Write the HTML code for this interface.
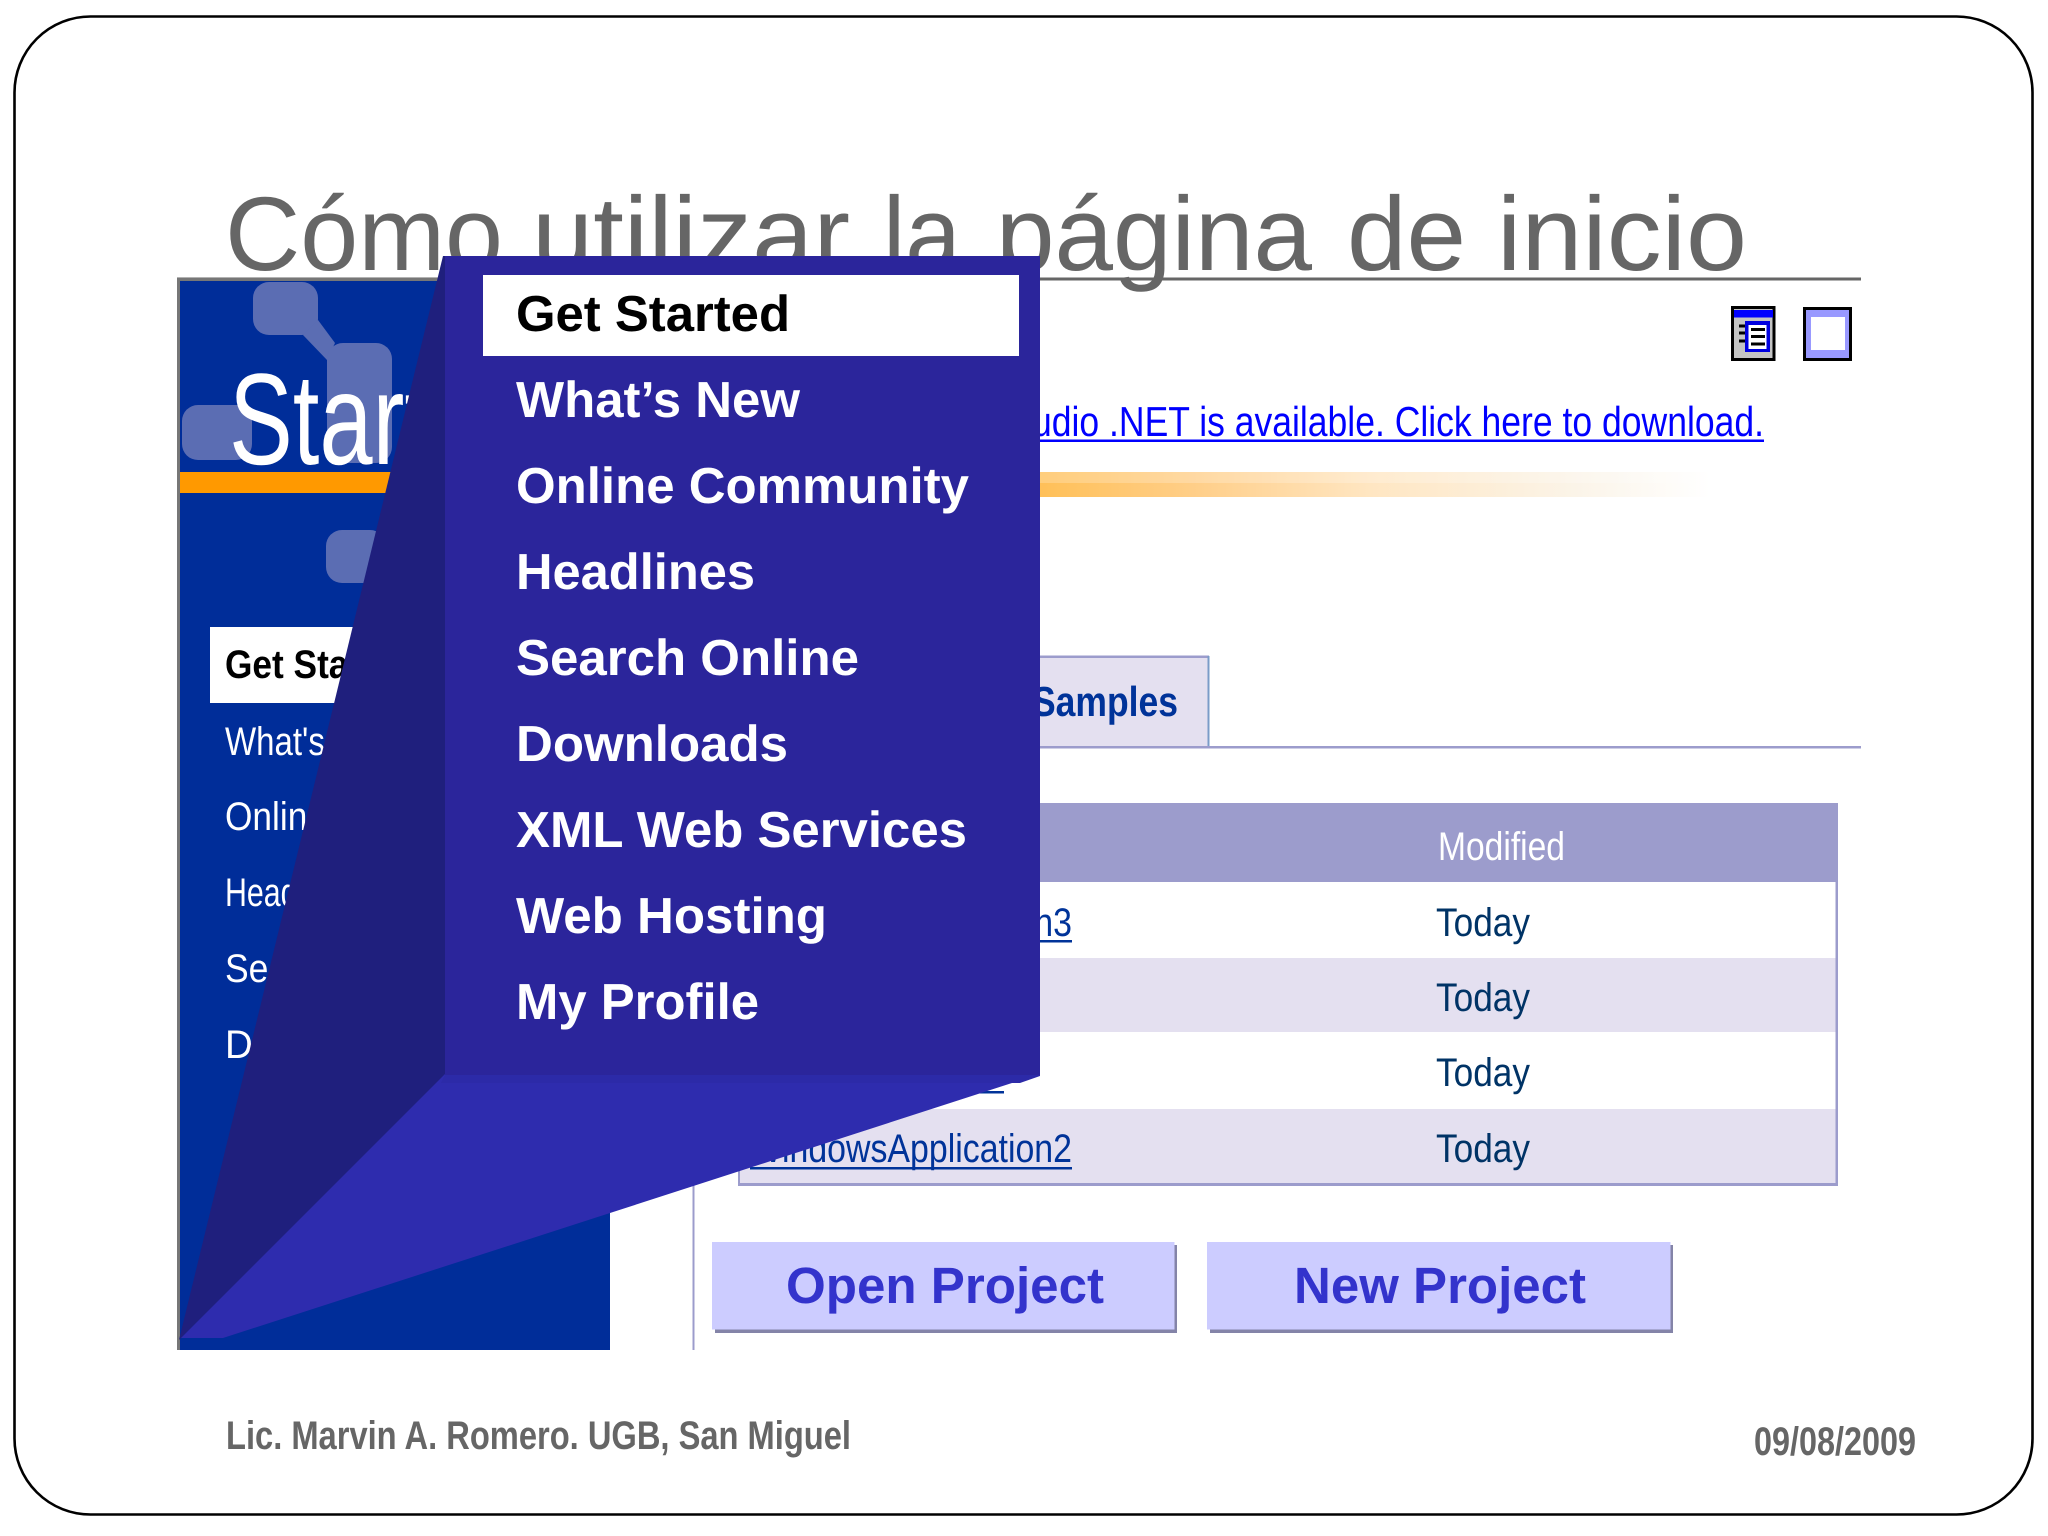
<!DOCTYPE html>
<html lang="es">
<head>
<meta charset="utf-8">
<title>Cómo utilizar la página de inicio</title>
<style>
html,body{margin:0;padding:0;background:#fff;width:2048px;height:1536px;overflow:hidden}
svg{display:block;position:absolute;left:0;top:0;text-rendering:geometricPrecision}
text{font-family:"Liberation Sans",sans-serif}
.h{font-size:105px;fill:#666}
.m{font-weight:bold;font-size:50.7px;fill:#fff}
.n{font-size:40px;fill:#fff}
.t{font-size:40px;fill:#003366}
.l{font-size:40px;fill:#003399}
.b{font-weight:bold;font-size:51px;fill:#3333cc}
.f{font-weight:bold;font-size:40px;fill:#666}
</style>
</head>
<body>
<svg width="2048" height="1536" viewBox="0 0 2048 1536" xmlns="http://www.w3.org/2000/svg">
<defs>
<linearGradient id="g" x1="0" x2="1" y1="0" y2="0">
<stop offset="0" stop-color="#ffbf55"/>
<stop offset=".25" stop-color="#ffcf8a"/>
<stop offset=".5" stop-color="#ffe6c2"/>
<stop offset=".8" stop-color="#fbf4e8"/>
<stop offset="1" stop-color="#ffffff"/>
</linearGradient>
</defs>

<rect x="14.5" y="16.5" width="2018" height="1498" rx="76" ry="76" fill="#fff" stroke="#000" stroke-width="2.6"/>

<!-- title -->
<text x="225" y="270" class="h" textLength="278" lengthAdjust="spacingAndGlyphs">Cómo</text>
<text x="532" y="270" class="h" textLength="318" lengthAdjust="spacingAndGlyphs">utilizar</text>
<text x="883" y="270" class="h" textLength="78" lengthAdjust="spacingAndGlyphs">la</text>
<text x="996" y="270" class="h" textLength="316" lengthAdjust="spacingAndGlyphs">página</text>
<text x="1347" y="270" class="h" textLength="119" lengthAdjust="spacingAndGlyphs">de</text>
<text x="1497" y="270" class="h" textLength="250" lengthAdjust="spacingAndGlyphs">inicio</text>
<rect x="177" y="277.5" width="1684" height="3" fill="#666"/>

<!-- left panel -->
<rect x="177" y="279" width="433" height="1071" fill="#002d99"/>
<rect x="177" y="279" width="3" height="1071" fill="#777"/>
<rect x="177" y="278" width="433" height="3" fill="#777"/>
<g fill="#5b6db3">
<rect x="253" y="282" width="65" height="53" rx="16"/>
<polygon points="303,335 318,320 335,343 327,360"/>
<rect x="327" y="343" width="65" height="120" rx="16"/>
<rect x="182" y="405" width="70" height="55" rx="16"/>
<rect x="326" y="530" width="60" height="53" rx="16"/>
</g>
<text x="229" y="464" font-size="130" fill="#fff" textLength="202" lengthAdjust="spacingAndGlyphs">Start</text>
<rect x="180" y="472" width="240" height="21" fill="#ff9900"/>

<rect x="210" y="627" width="170" height="76" fill="#fff"/>
<text x="225" y="678" class="n" style="font-weight:bold;fill:#000" textLength="190" lengthAdjust="spacingAndGlyphs">Get Started</text>
<text x="225" y="755" class="n" textLength="175" lengthAdjust="spacingAndGlyphs">What's New</text>
<text x="225" y="830" class="n" textLength="290" lengthAdjust="spacingAndGlyphs">Online Community</text>
<text x="225" y="906" class="n" textLength="135" lengthAdjust="spacingAndGlyphs">Headlines</text>
<text x="225" y="982" class="n" textLength="225" lengthAdjust="spacingAndGlyphs">Search Online</text>
<text x="225" y="1058" class="n" textLength="190" lengthAdjust="spacingAndGlyphs">Downloads</text>

<!-- right content -->
<rect x="692.5" y="747" width="2" height="603" fill="#9c9ccc"/>

<!-- icons -->
<rect x="1732.5" y="307.5" width="41.5" height="52" fill="#c4c4c4" stroke="#000" stroke-width="3"/>
<rect x="1734" y="310" width="39" height="7.5" fill="#0000ff"/>
<rect x="1745" y="321" width="25" height="31" fill="#0000e0"/>
<rect x="1748.5" y="325" width="18" height="24" fill="#fff"/>
<g fill="#000">
<rect x="1751" y="328" width="14" height="3"/><rect x="1751" y="335" width="14" height="3"/><rect x="1751" y="342.500" width="14" height="3"/>
<rect x="1739" y="324.500" width="6" height="3"/><rect x="1739" y="331.500" width="6" height="3"/><rect x="1739" y="339.500" width="6" height="3"/>
</g>
<rect x="1804.500" y="308.500" width="46" height="51" fill="#9999ff" stroke="#000" stroke-width="3"/>
<rect x="1811" y="317" width="34" height="33" fill="#fff"/>

<!-- link -->
<text x="1032" y="436" font-size="42" fill="#0000ff" textLength="732" lengthAdjust="spacingAndGlyphs">udio .NET is available. Click here to download.</text>
<rect x="1030" y="439.500" width="734" height="2.500" fill="#0000ff"/>

<!-- gradient band -->
<rect x="1030" y="472" width="680" height="25" fill="url(#g)"/>
<rect x="1030" y="472" width="680" height="11" fill="#fff" fill-opacity=".22"/>

<!-- tab -->
<rect x="900" y="657" width="308" height="90" fill="#e4e0f0"/>
<rect x="900" y="655.500" width="309" height="2.500" fill="#9c9ccc"/>
<rect x="1207.500" y="656" width="2" height="91" fill="#7a9cc8"/>
<rect x="693" y="746" width="1168" height="2.500" fill="#9c9ccc"/>
<text x="1032" y="716" font-size="42" font-weight="bold" fill="#003399" textLength="146" lengthAdjust="spacingAndGlyphs">Samples</text>

<!-- table -->
<rect x="738" y="803" width="1100" height="79" fill="#9c9ccc"/>
<rect x="738" y="882" width="1100" height="304" fill="#fff"/>
<rect x="738" y="958" width="1098" height="74" fill="#e4e0f0"/>
<rect x="738" y="1109" width="1098" height="75" fill="#e4e0f0"/>
<rect x="1835.500" y="882" width="2.500" height="304" fill="#9c9ccc"/>
<rect x="738" y="882" width="2" height="304" fill="#9c9ccc"/>
<rect x="738" y="1183" width="1100" height="3" fill="#9c9ccc"/>
<text x="1438" y="860" class="n" textLength="127" lengthAdjust="spacingAndGlyphs">Modified</text>
<text x="1436" y="936" class="t" textLength="94" lengthAdjust="spacingAndGlyphs">Today</text>
<text x="1436" y="1011" class="t" textLength="94" lengthAdjust="spacingAndGlyphs">Today</text>
<text x="1436" y="1086" class="t" textLength="94" lengthAdjust="spacingAndGlyphs">Today</text>
<text x="1436" y="1162" class="t" textLength="94" lengthAdjust="spacingAndGlyphs">Today</text>
<text x="750" y="936" class="l" textLength="322" lengthAdjust="spacingAndGlyphs">WindowsApplication3</text>
<rect x="750" y="940" width="322" height="2.500" fill="#003399"/>
<rect x="750" y="1091" width="254" height="2.500" fill="#003399"/>
<text x="750" y="1162" class="l" textLength="322" lengthAdjust="spacingAndGlyphs">WindowsApplication2</text>
<rect x="750" y="1167" width="322" height="2.500" fill="#003399"/>

<!-- buttons -->
<rect x="715" y="1245" width="462" height="88" fill="#8484a8"/>
<rect x="712" y="1242" width="462.500" height="87.500" fill="#ccccff"/>
<rect x="1210" y="1245" width="463" height="88" fill="#8484a8"/>
<rect x="1207" y="1242" width="463.500" height="87.500" fill="#ccccff"/>
<text x="786" y="1303" class="b" textLength="318" lengthAdjust="spacingAndGlyphs">Open Project</text>
<text x="1294" y="1303" class="b" textLength="292" lengthAdjust="spacingAndGlyphs">New Project</text>

<!-- footer -->
<text x="226" y="1449" class="f" textLength="625" lengthAdjust="spacingAndGlyphs">Lic. Marvin A. Romero. UGB, San Miguel</text>
<text x="1754" y="1455" class="f" textLength="162" lengthAdjust="spacingAndGlyphs">09/08/2009</text>

<!-- callout -->
<polygon points="443,256 446,256 446,1076 179,1340" fill="#1f1f7d"/>
<polygon points="445,1074 1040,1074 610,1213 223,1338 181,1338" fill="#2e2cae"/>
<polygon points="445,256 1040,256 1040,1076 445,1076" fill="#2b259b"/>
<polygon points="445,1075 1040,1075 1040,1076 1020,1083 441,1083" fill="#2c2aa8"/>
<rect x="483" y="275" width="536" height="81" fill="#fff"/>
<text x="516" y="331" class="m" style="fill:#000" textLength="274" lengthAdjust="spacingAndGlyphs">Get Started</text>
<text x="516" y="417" class="m" textLength="284" lengthAdjust="spacingAndGlyphs">What’s New</text>
<text x="516" y="503" class="m" textLength="453" lengthAdjust="spacingAndGlyphs">Online Community</text>
<text x="516" y="589" class="m" textLength="239" lengthAdjust="spacingAndGlyphs">Headlines</text>
<text x="516" y="675" class="m" textLength="343" lengthAdjust="spacingAndGlyphs">Search Online</text>
<text x="516" y="761" class="m" textLength="272" lengthAdjust="spacingAndGlyphs">Downloads</text>
<text x="516" y="847" class="m" textLength="451" lengthAdjust="spacingAndGlyphs">XML Web Services</text>
<text x="516" y="933" class="m" textLength="311" lengthAdjust="spacingAndGlyphs">Web Hosting</text>
<text x="516" y="1019" class="m" textLength="243" lengthAdjust="spacingAndGlyphs">My Profile</text>
</svg>
</body>
</html>
